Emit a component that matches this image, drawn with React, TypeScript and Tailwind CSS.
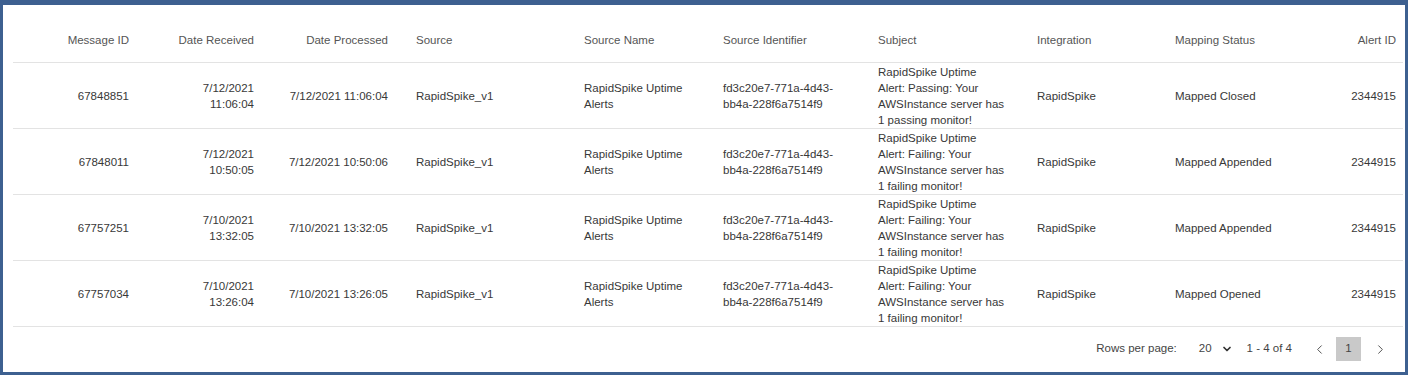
import { FC } from "react";
import { ChevronDown, ChevronLeft, ChevronRight } from "lucide-react";

type Row = {
  id: string;
  received: [string, string];
  processed: string;
  source: string;
  sourceName: string;
  identifier: string;
  subject: string[];
  integration: string;
  status: string;
  alertId: string;
};

const failing = [
  "RapidSpike Uptime",
  "Alert: Failing: Your",
  "AWSInstance server has",
  "1 failing monitor!",
];

const rows: Row[] = [
  {
    id: "67848851",
    received: ["7/12/2021", "11:06:04"],
    processed: "7/12/2021 11:06:04",
    source: "RapidSpike_v1",
    sourceName: "RapidSpike Uptime Alerts",
    identifier: "fd3c20e7-771a-4d43-bb4a-228f6a7514f9",
    subject: [
      "RapidSpike Uptime",
      "Alert: Passing: Your",
      "AWSInstance server has",
      "1 passing monitor!",
    ],
    integration: "RapidSpike",
    status: "Mapped Closed",
    alertId: "2344915",
  },
  {
    id: "67848011",
    received: ["7/12/2021", "10:50:05"],
    processed: "7/12/2021 10:50:06",
    source: "RapidSpike_v1",
    sourceName: "RapidSpike Uptime Alerts",
    identifier: "fd3c20e7-771a-4d43-bb4a-228f6a7514f9",
    subject: failing,
    integration: "RapidSpike",
    status: "Mapped Appended",
    alertId: "2344915",
  },
  {
    id: "67757251",
    received: ["7/10/2021", "13:32:05"],
    processed: "7/10/2021 13:32:05",
    source: "RapidSpike_v1",
    sourceName: "RapidSpike Uptime Alerts",
    identifier: "fd3c20e7-771a-4d43-bb4a-228f6a7514f9",
    subject: failing,
    integration: "RapidSpike",
    status: "Mapped Appended",
    alertId: "2344915",
  },
  {
    id: "67757034",
    received: ["7/10/2021", "13:26:04"],
    processed: "7/10/2021 13:26:05",
    source: "RapidSpike_v1",
    sourceName: "RapidSpike Uptime Alerts",
    identifier: "fd3c20e7-771a-4d43-bb4a-228f6a7514f9",
    subject: failing,
    integration: "RapidSpike",
    status: "Mapped Opened",
    alertId: "2344915",
  },
];

// shared column template for header + body
const cols =
  "grid grid-cols-[116px_125px_162px_168px_139px_155px_159px_138px_1fr_100px]";

const HeaderRow: FC = () => (
  <div
    className={`${cols} h-[58px] items-end pb-[14px] border-b border-[#e3e3e3] text-[#555] leading-4`}
  >
    <div className="text-right">Message ID</div>
    <div className="text-right">Date Received</div>
    <div className="text-right pr-[28px]">Date Processed</div>
    <div>Source</div>
    <div>Source Name</div>
    <div>Source Identifier</div>
    <div>Subject</div>
    <div>Integration</div>
    <div>Mapping Status</div>
    <div className="text-right pr-[7px]">Alert ID</div>
  </div>
);

const BodyRow: FC<{ row: Row }> = ({ row }) => (
  <div
    className={`${cols} h-[66px] items-center border-b border-[#e3e3e3] text-[#383838] leading-4`}
  >
    <div className="text-right">{row.id}</div>
    <div className="text-right">
      <div>{row.received[0]}</div>
      <div>{row.received[1]}</div>
    </div>
    <div className="text-right pr-[28px] whitespace-nowrap">{row.processed}</div>
    <div>{row.source}</div>
    <div className="w-[115px]">{row.sourceName}</div>
    <div className="w-[120px]">{row.identifier}</div>
    <div className="whitespace-nowrap">
      {row.subject.map((line, i) => (
        <div key={i}>{line}</div>
      ))}
    </div>
    <div>{row.integration}</div>
    <div>{row.status}</div>
    <div className="text-right pr-[7px]">{row.alertId}</div>
  </div>
);

const Pagination: FC = () => (
  <div className="h-[44px] flex items-center justify-end text-[#444]">
    <span>Rows per page:</span>
    <span className="ml-[22px]">20</span>
    <ChevronDown size={12} strokeWidth={3.5} className="ml-[9px] text-[#333]" />
    <span className="ml-[14px]">1 - 4 of 4</span>
    <ChevronLeft size={15} strokeWidth={1.6} className="ml-[20px] text-[#555]" />
    <div className="ml-[9px] w-[25px] h-[24px] bg-[#c9c9c9] flex items-center justify-center text-[#444]">
      1
    </div>
    <ChevronRight size={15} strokeWidth={1.6} className="ml-[12px] mr-[15px] text-[#555]" />
  </div>
);

export default function App() {
  return (
    <div
      className="w-[1408px] h-[375px] bg-white border-[3px] border-t-[5px] border-[#3d6090] text-[11.5px]"
      style={{ fontFamily: '"Liberation Sans", Arial, sans-serif' }}
    >
      <div className="ml-[10px] mr-[2px]">
        <HeaderRow />
        {rows.map((r) => (
          <BodyRow key={r.id} row={r} />
        ))}
        <Pagination />
      </div>
    </div>
  );
}
